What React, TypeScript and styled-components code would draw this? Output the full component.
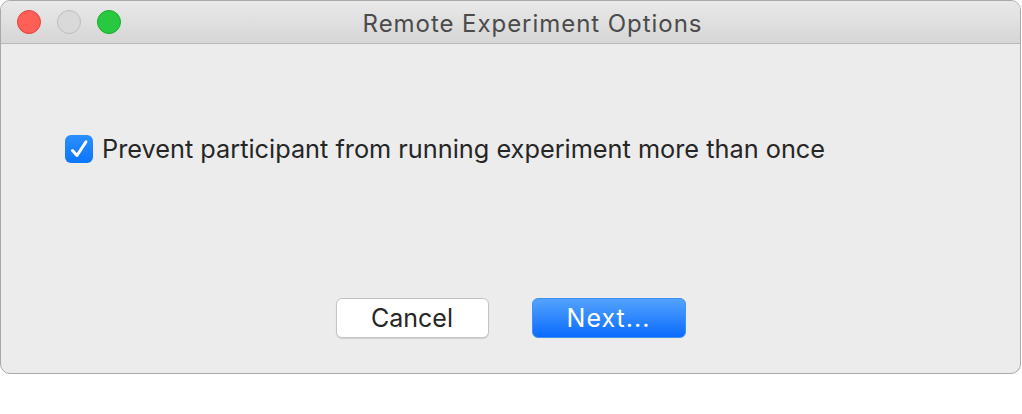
import React from "react";
import styled, { createGlobalStyle } from "styled-components";

const Global = createGlobalStyle`
  html, body { margin: 0; padding: 0; background: #ffffff; }
  body { font-family: Inter, "Liberation Sans", "Noto Sans", sans-serif; }
`;

const Window = styled.div`
  width: 1021px;
  height: 374px;
  box-sizing: border-box;
  border: 1px solid #a9a9a9;
  border-radius: 10px;
  overflow: hidden;
  background: #ececec;
  display: flex;
  flex-direction: column;
`;

const TitleBar = styled.div`
  height: 43px;
  flex: 0 0 43px;
  box-sizing: border-box;
  background: linear-gradient(#e9e9e9, #d6d6d6);
  border-bottom: 1px solid #b9b9b9;
  display: grid;
  grid-template-columns: 140px 1fr 140px;
  align-items: center;
`;

const Lights = styled.div`
  display: flex;
  gap: 16px;
  padding-left: 16px;
`;

const Light = styled.span<{ $fill: string; $edge: string }>`
  width: 24px;
  height: 24px;
  box-sizing: border-box;
  border-radius: 50%;
  background: ${(p) => p.$fill};
  border: 1px solid ${(p) => p.$edge};
`;

const Title = styled.div`
  text-align: center;
  font-size: 24px;
  letter-spacing: 0.95px;
  color: #4b4b4b;
  padding-top: 3px;
  padding-left: 44px;
`;

const Content = styled.div`
  flex: 1;
  display: flex;
  flex-direction: column;
  padding: 89px 0 35px 0;
`;

const Row = styled.label`
  display: flex;
  align-items: center;
  gap: 9px;
  padding-left: 64px;
  font-size: 25.3px;
  color: #262626;
`;

const Box = styled.span`
  width: 28px;
  height: 28px;
  border-radius: 6px;
  background: linear-gradient(#2a8ffd, #0c76fb);
  display: flex;
`;

const Spacer = styled.div`
  flex: 1;
`;

const Buttons = styled.div`
  display: flex;
  justify-content: center;
  gap: 43px;
`;

const Button = styled.button<{ $primary?: boolean }>`
  width: ${(p) => (p.$primary ? "154px" : "153px")};
  height: 40px;
  border-radius: 6px;
  font-family: inherit;
  font-size: 25px;
  cursor: default;
  padding: 0;
  ${(p) =>
    p.$primary
      ? `
    background: linear-gradient(#53a3fd, #0a6bfe);
    border: 1px solid #3f8ff5;
    color: #ffffff;
    letter-spacing: 1px;
  `
      : `
    background: #ffffff;
    border: 1px solid #c4c4c4;
    box-shadow: 0 1px 1px rgba(0,0,0,0.12);
    color: #262626;
  `}
`;

export default function App() {
  return (
    <>
      <Global />
      <Window>
        <TitleBar>
          <Lights>
            <Light $fill="#fe5f57" $edge="#e0443e" />
            <Light $fill="#d9d9d9" $edge="#bdbdbd" />
            <Light $fill="#28c840" $edge="#1aab29" />
          </Lights>
          <Title>Remote Experiment Options</Title>
          <div />
        </TitleBar>
        <Content>
          <Row>
            <Box>
              <svg width="28" height="28" viewBox="0 0 28 28">
                <path d="M7.5 15.5 L12 20.5 L21 6.8" fill="none" stroke="#fff" strokeWidth="3" strokeLinecap="round" strokeLinejoin="round" />
              </svg>
            </Box>
            <span>Prevent participant from running experiment more than once</span>
          </Row>
          <Spacer />
          <Buttons>
            <Button>Cancel</Button>
            <Button $primary>Next...</Button>
          </Buttons>
        </Content>
      </Window>
    </>
  );
}
